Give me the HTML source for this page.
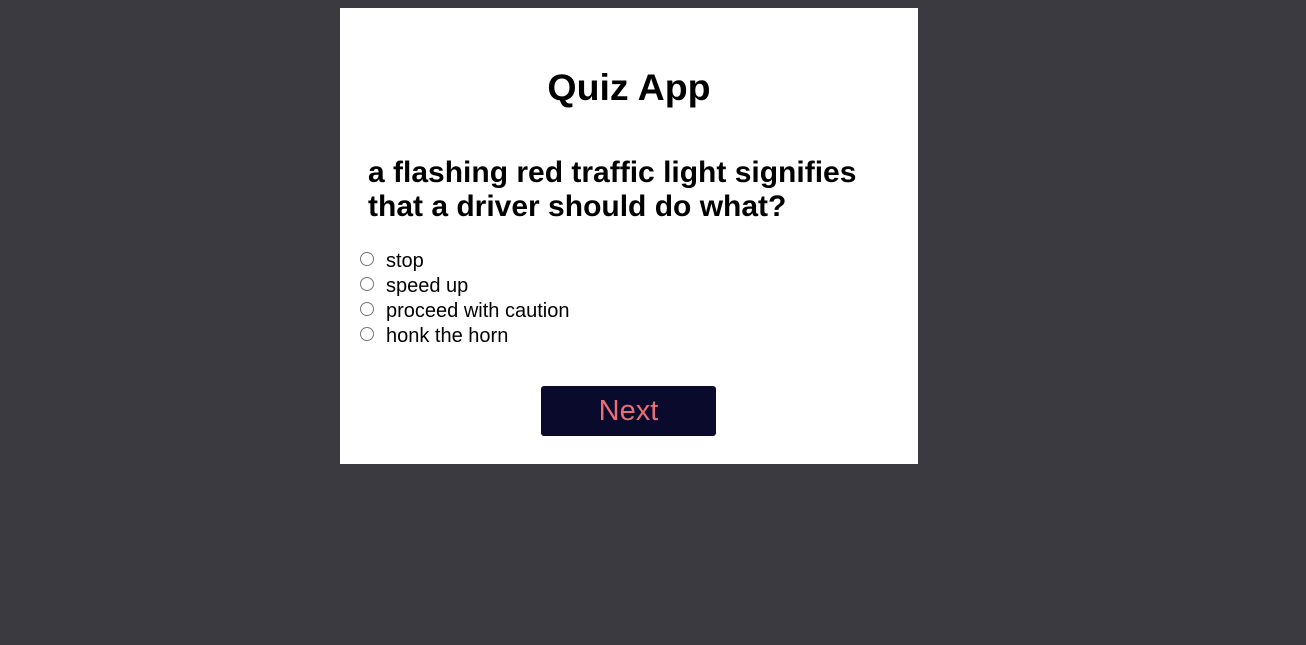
<!DOCTYPE html>
<html><head><meta charset="utf-8"><style>
html,body{margin:0;padding:0;background:#3b3a40;width:1306px;height:645px;overflow:hidden;font-family:"Liberation Sans",Arial,sans-serif}
.card{position:absolute;left:340px;top:8px;width:578px;height:456px;background:#fff}
h1{position:absolute;left:0;width:578px;top:58px;margin:0;text-align:center;font-size:37.5px;font-weight:bold;color:#000;line-height:42px}
h2{position:absolute;left:28px;top:148px;margin:0;font-size:30px;font-weight:bold;line-height:34px;color:#000}
.opt{position:absolute;left:20px;height:25px;font-size:20px;line-height:25px;color:#000}
.r{position:absolute;left:0;top:3px;width:14px;height:14px;border:1px solid #767676;border-radius:50%;box-sizing:border-box}
.opt span{position:absolute;left:26px;top:0;white-space:nowrap}
.btn{position:absolute;left:201px;top:378px;width:175px;height:50px;background:#0a0a2c;border-radius:3px;color:#e76f73;font-size:29px;text-align:center;line-height:51px}
</style></head><body>
<div class="card">
<h1>Quiz App</h1>
<h2>a flashing red traffic light signifies<br>that a driver should do what?</h2>
<div class="opt" style="top:241px"><div class="r"></div><span>stop</span></div>
<div class="opt" style="top:266px"><div class="r"></div><span>speed up</span></div>
<div class="opt" style="top:291px"><div class="r"></div><span>proceed with caution</span></div>
<div class="opt" style="top:316px"><div class="r"></div><span>honk the horn</span></div>
<div class="btn">Next</div>
</div>
</body></html>
